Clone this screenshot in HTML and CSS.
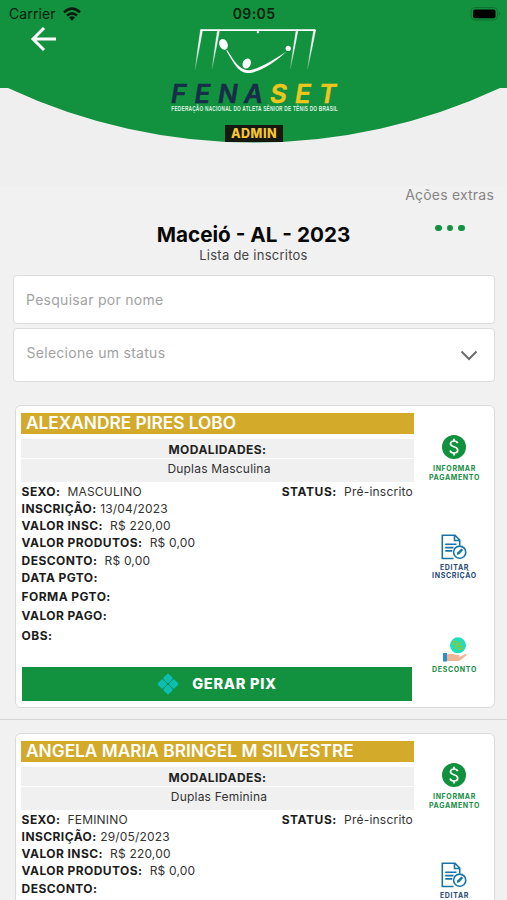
FILE: index.html
```html
<!DOCTYPE html>
<html lang="pt-BR">
<head>
<meta charset="utf-8">
<title>Lista de inscritos</title>
<link rel="stylesheet" href="styles.css">
</head>
<body>
<svg width="0" height="0" class="defs" aria-hidden="true">
  <defs>
    <linearGradient id="fade" x1="0" y1="28" x2="0" y2="72" gradientUnits="userSpaceOnUse"><stop offset=".45" stop-color="#fff"/><stop offset="1" stop-color="#fff" stop-opacity="0"/></linearGradient>
    <symbol id="pay" viewBox="0 0 24 24">
      <circle cx="12" cy="12" r="12" fill="#10913e"/>
      <path d="M15.7 8.1C15.2 6.7 13.8 6 12 6C9.9 6 8.5 7 8.5 8.8C8.5 12.6 15.7 10.9 15.7 15C15.7 16.9 14.2 18 12 18C9.9 18 8.5 17.1 8.1 15.5M12 3.7V6M12 18V20.4" fill="none" stroke="#fff" stroke-width="1.7"/>
    </symbol>
    <symbol id="edit" viewBox="0 0 26 26">
      <g fill="none" stroke="#1874a6" stroke-width="1.6">
        <path d="M12.5 24.5H1.3V1.3H14L18.7 6V11.5M13.5 1.8V6.5H18.2M4.2 10.3H15.5M4.2 13.6H12.5M4.2 16.9H11.3"/>
        <circle cx="18.7" cy="18.2" r="6.1"/>
      </g>
      <path d="M15.7 21.1L16.5 18.2L20.5 14.5L22.2 16.1L18.4 20.2Z" fill="#1874a6"/>
    </symbol>
    <symbol id="hand" viewBox="0 0 26 25">
      <circle cx="16" cy="8.3" r="8" fill="#1edfbd"/>
      <path d="M12.5 12L19.3 4.5" stroke="#8cc63f" stroke-width="1.5"/>
      <g fill="none" stroke="#8cc63f" stroke-width="1.4"><circle cx="13" cy="6" r="1.8"/><circle cx="18.5" cy="10.7" r="1.8"/></g>
      <path d="M5 17.5C8 16.3 10 16.4 12.4 17.6L16.8 18Q18 18.8 16.4 19.4L18.6 19.5L23.4 17.1Q25.5 17 24.6 18.2L18.5 23Q17 24.2 14.5 24H5Z" fill="#edb592"/>
      <path d="M1 16H5V24.5H1Z" fill="#2790d3"/>
    </symbol>
  </defs>
</svg>

<header class="top">
  <svg class="curve" width="507" height="150" viewBox="0 0 507 150"><path d="M0 0H507V88H500A582 582 0 0 1 8 88H0Z" fill="#12913f"/></svg>
  <div class="statusbar">
    <div class="carrier">Carrier
      <svg width="18" height="14" viewBox="0 0 18 14"><g fill="none" stroke="#041a0b" stroke-width="2.5"><path d="M1 5.3Q9-2 17 5.3"/><path d="M4 8.6Q9 4.1 14 8.6"/></g><path d="M5.9 10.5Q9 7.9 12.1 10.5L9 13.7Z" fill="#041a0b"/></svg>
    </div>
    <div class="clock">09:05</div>
    <svg class="battery" width="34" height="16" viewBox="0 0 34 16"><rect x="1" y="1.5" width="26.5" height="12.5" rx="4" fill="none" stroke="#0c7331" stroke-width="1"/><rect x="3" y="3.5" width="22.5" height="8.7" rx="2" fill="#000"/><path d="M29 5.8Q31.5 7.7 29 9.7Z" fill="#0c7331"/></svg>
  </div>
  <div class="brand">
    <svg class="back" width="28" height="28" viewBox="0 0 28 28"><path d="M14 3L3 14L14 25M3.3 14H26" fill="none" stroke="#fff" stroke-width="3"/></svg>
    <svg class="logo" width="180" height="90" viewBox="165 25 180 90">
      <path d="M200.5 30.2H315.2" stroke="#fff" stroke-width="1.7"/>
      <path d="M202.5 30L195 70L200.6 30ZM219.5 30L212 69L217.6 30ZM298 30L290.3 69L296.3 30ZM315.6 30L307.5 69L313.8 30ZM257.2 30H258.6V33H257.2Z" fill="url(#fade)" stroke="url(#fade)" stroke-width=".6"/>
      <path d="M226.2 50.5C233 62 238 72.8 247.5 73C257.5 73.3 275 63 286.2 51.5C275 59.5 256 70.7 247.6 70.2C238.5 69.5 233 59 227.2 50Z" fill="#fff"/>
      <ellipse cx="223.5" cy="44.3" rx="4.1" ry="5.6" transform="rotate(-23 223.5 44.3)" fill="#fff"/>
      <ellipse cx="246.7" cy="63.5" rx="4" ry="5.2" transform="rotate(25 246.7 63.5)" fill="#fff"/>
      <circle cx="288.2" cy="48.4" r="2.6" fill="#fff"/>
      <g class="wordmark" transform="translate(0 102.5)">
        <text x="171 194.5 218 244" y="0" fill="#172d49" stroke="#172d49">FENA</text>
        <text x="270 295 319" y="0" fill="#efc61d" stroke="#efc61d">SET</text>
      </g>
      <g transform="translate(171.3 111) scale(.72 1)"><text class="tagline" textLength="231">FEDERAÇÃO NACIONAL DO ATLETA SÊNIOR DE TÊNIS DO BRASIL</text></g>
    </svg>
  </div>
  <div class="admin">ADMIN</div>
</header>

<section class="heading">
  <div class="extras">Ações extras</div>
  <div class="titles">
    <h1>Maceió - AL - 2023</h1>
    <p>Lista de inscritos</p>
    <div class="dots"><i></i><i></i><i></i></div>
  </div>
</section>

<section class="filters">
  <div class="field search">Pesquisar por nome</div>
  <div class="field select">Selecione um status
    <svg width="18" height="12" viewBox="0 0 18 12"><path d="M1.5 1.5L9 9L16.5 1.5" fill="none" stroke="#6c6c6c" stroke-width="2"/></svg>
  </div>
</section>

<main>
  <article class="card">
    <div class="info">
      <h2>ALEXANDRE PIRES LOBO</h2>
      <div class="mod-title">MODALIDADES:</div>
      <div class="mod">Duplas Masculina</div>
      <div class="row split"><span><b>SEXO:</b>&nbsp; MASCULINO</span><span class="status"><b>STATUS:</b>&nbsp; Pré-inscrito</span></div>
      <div class="row"><b>INSCRIÇÃO:</b> 13/04/2023</div>
      <div class="row"><b>VALOR INSC:</b>&nbsp; R$ 220,00</div>
      <div class="row"><b>VALOR PRODUTOS:</b>&nbsp; R$ 0,00</div>
      <div class="row"><b>DESCONTO:</b>&nbsp; R$ 0,00</div>
      <div class="row"><b>DATA PGTO:</b></div>
      <div class="row tall"><b>FORMA PGTO:</b></div>
      <div class="row tall"><b>VALOR PAGO:</b></div>
      <div class="row tall"><b>OBS:</b></div>
      <div class="pix">
        <svg width="22" height="22" viewBox="0 0 22 22"><g fill="#0cbdb2"><rect x="-3.7" y="-3.7" width="7.4" height="7.4" rx="1.6" transform="translate(11 5.3) rotate(45)"/><rect x="-3.7" y="-3.7" width="7.4" height="7.4" rx="1.6" transform="translate(5.3 11) rotate(45)"/><rect x="-3.7" y="-3.7" width="7.4" height="7.4" rx="1.6" transform="translate(16.7 11) rotate(45)"/><rect x="-3.7" y="-3.7" width="7.4" height="7.4" rx="1.6" transform="translate(11 16.7) rotate(45)"/></g></svg>
        <span>GERAR PIX</span>
      </div>
    </div>
    <aside>
      <div class="action pay"><svg width="24" height="24"><use href="#pay"/></svg><span>INFORMAR<br>PAGAMENTO</span></div>
      <div class="action edit"><svg width="26" height="26"><use href="#edit"/></svg><span>EDITAR<br>INSCRIÇÃO</span></div>
      <div class="action discount"><svg width="26" height="25"><use href="#hand"/></svg><span>DESCONTO</span></div>
    </aside>
  </article>
  <hr>
  <article class="card">
    <div class="info">
      <h2>ANGELA MARIA BRINGEL M SILVESTRE</h2>
      <div class="mod-title">MODALIDADES:</div>
      <div class="mod">Duplas Feminina</div>
      <div class="row split"><span><b>SEXO:</b>&nbsp; FEMININO</span><span class="status"><b>STATUS:</b>&nbsp; Pré-inscrito</span></div>
      <div class="row"><b>INSCRIÇÃO:</b> 29/05/2023</div>
      <div class="row"><b>VALOR INSC:</b>&nbsp; R$ 220,00</div>
      <div class="row"><b>VALOR PRODUTOS:</b>&nbsp; R$ 0,00</div>
      <div class="row"><b>DESCONTO:</b></div>
    </div>
    <aside>
      <div class="action pay"><svg width="24" height="24"><use href="#pay"/></svg><span>INFORMAR<br>PAGAMENTO</span></div>
      <div class="action edit"><svg width="26" height="26"><use href="#edit"/></svg><span>EDITAR</span></div>
    </aside>
  </article>
</main>
</body>
</html>
```
FILE: styles.css
```css
* { box-sizing: border-box; }
body { margin: 0; width: 507px; height: 900px; overflow: hidden; background: #f1f1f1; color: #333; font-family: Inter, "Liberation Sans", sans-serif; }
.defs { position: absolute; }

.top { position: relative; height: 186px; background: #efefef; }
.curve { position: absolute; left: 0; top: 0; }
.statusbar { position: relative; height: 25px; padding: 2px 3px 0 9px; display: grid; grid-template-columns: 1fr 66px 1fr; align-items: center; color: #06200e; }
.carrier { display: flex; align-items: center; gap: 7px; font-size: 14px; letter-spacing: .1px; }
.clock { font-size: 14px; font-weight: 600; text-align: center; letter-spacing: .4px; padding-right: 5px; }
.battery { justify-self: end; }
.brand { position: relative; height: 90px; display: flex; align-items: flex-start; padding-left: 30px; }
.logo { margin-left: 107px; overflow: visible; }
.wordmark { font: italic 600 26px Inter, sans-serif; stroke-width: .5px; }
.tagline { font: 700 6.6px "Liberation Sans", sans-serif; fill: #dff2e3; }
.admin { position: relative; width: 58px; height: 17px; margin: 10px 0 0 225px; background: #15190f; color: #f8c630; font-size: 12.5px; line-height: 18px; font-weight: 800; text-align: center; letter-spacing: .5px; }

.heading { height: 89px; }
.extras { height: 34px; padding: 0 13px 0 0; line-height: 18px; text-align: right; color: #858585; font-size: 14px; letter-spacing: .2px; }
.titles { display: grid; grid-template-columns: 110px 1fr 110px; }
h1 { grid-column: 2; margin: 0; font-size: 20.7px; line-height: 29px; height: 28px; font-weight: 700; color: #080808; text-align: center; white-space: nowrap; }
.titles p { grid-column: 2; grid-row: 2; margin: 0; font-size: 13px; line-height: 14px; text-align: center; color: #444; letter-spacing: .25px; }
.dots { grid-column: 3; grid-row: 1; display: flex; gap: 5px; padding: 4.5px 0 0 38px; }
.dots i { width: 6.7px; height: 6.7px; border-radius: 50%; background: #12913f; }

.filters { padding: 0 12px 0 13px; display: flex; flex-direction: column; gap: 4px; }
.field { border: 1px solid #dcdcdc; border-radius: 4px; background: #fff; color: #a2a2a2; font-size: 14px; letter-spacing: .28px; padding: 0 12px; }
.search { height: 49px; line-height: 47px; }
.select { height: 54px; line-height: 48px; display: flex; justify-content: space-between; padding: 0 16px 0 12.5px; }
.select svg { margin-top: 21px; }

main { padding-top: 23px; }
.card { height: 303px; margin: 0 12px 0 15px; padding: 7px 0 0 5px; border: 1px solid #dadada; border-radius: 6px; background: #fff; display: flex; }
.info { width: 393px; flex: none; }
h2 { margin: 0 0 5px; height: 21px; padding-left: 5px; background: #d3aa29; color: #fff; font-size: 17.3px; line-height: 20px; font-weight: 600; white-space: nowrap; }
.mod-title, .mod { background: #f0f0f0; text-align: center; font-size: 12px; }
.mod-title { height: 19px; line-height: 22px; font-weight: 700; color: #222; letter-spacing: .45px; margin-bottom: 1px; }
.mod { height: 23px; line-height: 19px; margin-bottom: 1px; padding-left: 3px; letter-spacing: .2px; }
.row { height: 17.15px; line-height: 17px; font-size: 12px; padding-left: .6px; letter-spacing: .18px; white-space: nowrap; }
.row b { font-weight: 700; color: #1c1c1c; letter-spacing: .43px; }
.split { display: flex; justify-content: space-between; }
.status { padding-right: 1px; letter-spacing: .22px; }
.status b { letter-spacing: .55px; }
.tall { height: 19.4px; line-height: 21px; }
.pix { height: 34px; margin: 22.5px 2px 0 1px; background: #12913f; color: #fff; display: flex; align-items: center; justify-content: center; gap: 13px; font-size: 14.6px; font-weight: 800; letter-spacing: .7px; }
aside { flex: 1; padding-top: 22px; display: flex; flex-direction: column; align-items: center; }
.action { display: flex; flex-direction: column; align-items: center; text-align: center; font-size: 7px; line-height: 8.5px; font-weight: 700; letter-spacing: .65px; color: #168d43; padding-left: 1px; }
.action span { margin-top: 6px; }
.action.pay { height: 98.5px; }
.action.edit { height: 103.5px; color: #284b75; }
.action.edit span { margin-top: 4px; }
.action.discount span { margin-top: 4px; }
hr { margin: 11px 0 13px; height: 1px; border: 0; background: #d5d5d5; }
```
